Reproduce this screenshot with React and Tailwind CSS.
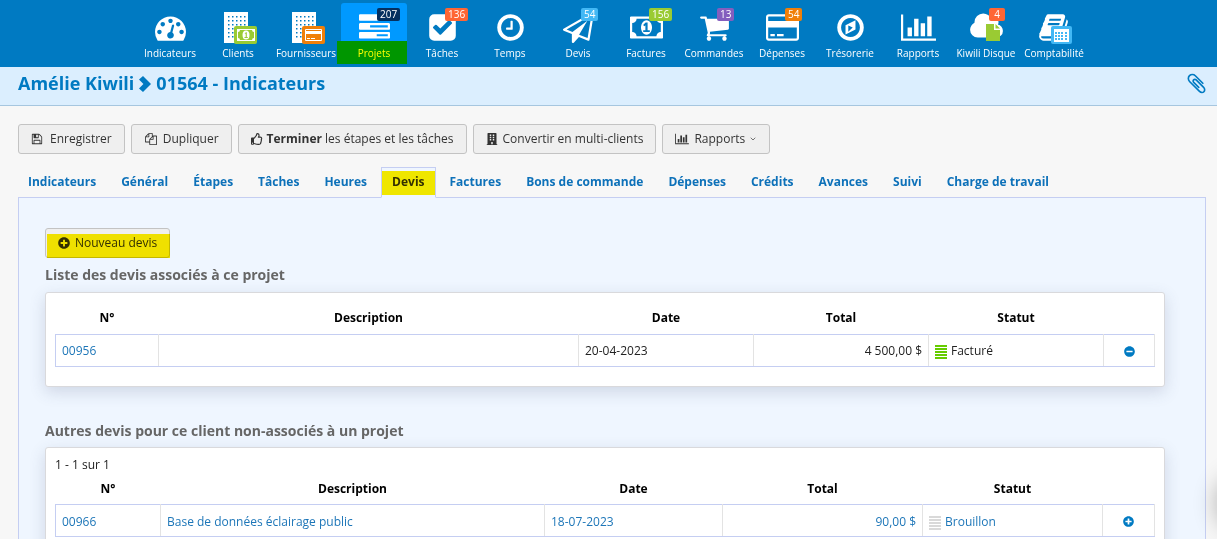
import React, { useState } from 'react';
import { FaBuilding, FaMinusCircle, FaPlusCircle, FaRegThumbsUp } from 'react-icons/fa';
import { ChevronDown } from 'lucide-react';

const paths = {
  gauge:
    'M384 1152q0-53-37.5-90.5t-90.5-37.5-90.5 37.5-37.5 90.5 37.5 90.5 90.5 37.5 90.5-37.5 37.5-90.5zm192-448q0-53-37.5-90.5t-90.5-37.5-90.5 37.5-37.5 90.5 37.5 90.5 90.5 37.5 90.5-37.5 37.5-90.5zm428 481l101-382q6-26-7.5-48.5t-38.5-29.5-48 6.5-30 39.5l-101 382q-60 5-107 43.5t-63 98.5q-20 77 20 146t117 89 146-20 89-117q16-60-6-117t-72-91zm660-33q0-53-37.5-90.5t-90.5-37.5-90.5 37.5-37.5 90.5 37.5 90.5 90.5 37.5 90.5-37.5 37.5-90.5zm-640-640q0-53-37.5-90.5t-90.5-37.5-90.5 37.5-37.5 90.5 37.5 90.5 90.5 37.5 90.5-37.5 37.5-90.5zm448 192q0-53-37.5-90.5t-90.5-37.5-90.5 37.5-37.5 90.5 37.5 90.5 90.5 37.5 90.5-37.5 37.5-90.5zm320 448q0 261-141 483-19 29-54 29h-1402q-35 0-54-29-141-221-141-483 0-182 71-348t191-286 286-191 348-71 348 71 286 191 191 286 71 348z',
  tasks:
    'M1024 1408h640v-128h-640v128zm-384-512h1024v-128h-1024v128zm640-512h384v-128h-384v128zm512 832v256q0 26-19 45t-45 19h-1664q-26 0-45-19t-19-45v-256q0-26 19-45t45-19h1664q26 0 45 19t19 45zm0-512v256q0 26-19 45t-45 19h-1664q-26 0-45-19t-19-45v-256q0-26 19-45t45-19h1664q26 0 45 19t19 45zm0-512v256q0 26-19 45t-45 19h-1664q-26 0-45-19t-19-45v-256q0-26 19-45t45-19h1664q26 0 45 19t19 45z',
  check:
    'M813 1299l614-614q19-19 19-45t-19-45l-102-102q-19-19-45-19t-45 19l-467 467-211-211q-19-19-45-19t-45 19l-102 102q-19 19-19 45t19 45l358 358q19 19 45 19t45-19zm851-883v960q0 119-84.5 203.5t-203.5 84.5h-960q-119 0-203.5-84.5t-84.5-203.5v-960q0-119 84.5-203.5t203.5-84.5h960q119 0 203.5 84.5t84.5 203.5z',
  clock:
    'M1024 544v448q0 14-9 23t-23 9h-320q-14 0-23-9t-9-23v-64q0-14 9-23t23-9h224v-352q0-14 9-23t23-9h64q14 0 23 9t9 23zm416 352q0-148-73-273t-198-198-273-73-273 73-198 198-73 273 73 273 198 198 273 73 273-73 198-198 73-273zm224 0q0 209-103 385.5t-279.5 279.5-385.5 103-385.5-103-279.5-279.5-103-385.5 103-385.5 279.5-279.5 385.5-103 385.5 103 279.5 279.5 103 385.5z',
  plane:
    'M1764 11q33 24 27 64l-256 1536q-5 29-32 45-14 8-31 8-11 0-24-5l-527-215-298 327q-18 21-47 21-14 0-23-4-19-7-30-23.5t-11-36.5v-452l-472-193q-37-14-40-55-3-39 32-59l1664-960q35-21 68 2zm-342 1499l221-1323-1434 827 336 137 863-639-478 797z',
  money:
    'M704 1152h384v-96h-128v-448h-114l-148 137 77 80q42-37 55-57h2v288h-128v96zm512-256q0 70-21 142t-59.5 134-101.5 101-138 39-138-39-101.5-101-59.5-134-21-142 21-142 59.5-134 101.5-101 138-39 138 39 101.5 101 59.5 134 21 142zm512 256v-512q-106 0-181-75t-75-181h-1152q0 106-75 181t-181 75v512q106 0 181 75t75 181h1152q0-106 75-181t181-75zm128-832v1152q0 26-19 45t-45 19h-1792q-26 0-45-19t-19-45v-1152q0-26 19-45t45-19h1792q26 0 45 19t19 45z',
  cart:
    'M704 1536q0 52-38 90t-90 38-90-38-38-90 38-90 90-38 90 38 38 90zm896 0q0 52-38 90t-90 38-90-38-38-90 38-90 90-38 90 38 38 90zm128-1088v512q0 24-16.5 42.5t-40.5 21.5l-1044 122q13 60 13 70 0 16-24 64h920q26 0 45 19t19 45-19 45-45 19h-1024q-26 0-45-19t-19-45q0-11 8-31.5t16-36 21.5-40 15.5-29.5l-177-823h-204q-26 0-45-19t-19-45 19-45 45-19h256q16 0 28.5 6.5t19.5 15.5 13 24.5 8 26 5.5 29.5 4.5 26h1201q26 0 45 19t19 45z',
  card:
    'M1760 128q66 0 113 47t47 113v1216q0 66-47 113t-113 47h-1600q-66 0-113-47t-47-113v-1216q0-66 47-113t113-47h1600zm-1600 128q-13 0-22.5 9.5t-9.5 22.5v224h1664v-224q0-13-9.5-22.5t-22.5-9.5h-1600zm1600 1280q13 0 22.5-9.5t9.5-22.5v-608h-1664v608q0 13 9.5 22.5t22.5 9.5h1600zm-1504-128v-128h256v128h-256zm384 0v-128h384v128h-384z',
  compass:
    'M768 1143l256-247-256-119v366zm416-663v527l-576 289v-527zm256 416q0-148-73-273t-198-198-273-73-273 73-198 198-73 273 73 273 198 198 273 73 273-73 198-198 73-273zm224 0q0 209-103 385.5t-279.5 279.5-385.5 103-385.5-103-279.5-279.5-103-385.5 103-385.5 279.5-279.5 385.5-103 385.5 103 279.5 279.5 103 385.5z',
  chart:
    'M640 896v512h-256v-512h256zm384-512v1024h-256v-1024h256zm1024 1152v128h-2048v-1536h128v1408h1920zm-640-896v768h-256v-768h256zm384-384v1152h-256v-1152h256z',
  cloud:
    'M1984 1152q0 159-112.5 271.5t-271.5 112.5h-1088q-185 0-316.5-131.5t-131.5-316.5q0-132 71-241.5t187-163.5q-2-28-2-43 0-212 150-362t362-150q158 0 286.5 88t187.5 230q70-62 166-62 106 0 181 75t75 181q0 75-41 138 129 30 213 134.5t84 239.5z',
  book:
    'M1703 478q40 57 18 129l-275 906q-19 64-76.5 107.5t-122.5 43.5h-923q-77 0-148.5-53.5t-99.5-131.5q-24-67-2-127 0-4 3-27t4-37q1-8-3-21.5t-3-19.5q2-11 8-21t16.5-23.5 16.5-23.5q23-38 45-91.5t30-91.5q3-10 .5-30t-.5-28q3-11 17-28t17-23q21-36 42-92t25-90q1-9-2.5-32t.5-28q4-13 22-30.5t22-22.5q19-26 42.5-84.5t27.5-96.5q1-8-3-25.5t-2-26.5q2-8 9-18t18-23 17-21q8-12 16.5-30.5t15-35 16-36 19.5-32 26.5-23.5 36-11.5 47.5 5.5l-1 3q38-9 51-9h761q74 0 114 56t18 130l-274 906q-36 119-71.5 153.5t-128.5 34.5h-869q-27 0-38 15-11 16-1 43 24 70 144 70h923q29 0 56-15.5t35-41.5l300-987q7-22 5-57 38 15 59 43zm-1064 2q-4 13 2 22.5t20 9.5h608q13 0 25.5-9.5t16.5-22.5l21-64q4-13-2-22.5t-20-9.5h-608q-13 0-25.5 9.5t-16.5 22.5zm-83 256q-4 13 2 22.5t20 9.5h608q13 0 25.5-9.5t16.5-22.5l21-64q4-13-2-22.5t-20-9.5h-608q-13 0-25.5 9.5t-16.5 22.5z',
  clip:
    'M1596 1385q0 117-79 196t-196 79q-135 0-235-100l-777-776q-113-115-113-271 0-159 110-270t269-111q158 0 273 113l605 606q10 10 10 22 0 16-30.5 46.5t-46.5 30.5q-13 0-23-10l-606-607q-79-77-181-77-106 0-179 75t-73 181q0 105 76 181l776 777q63 63 145 63 64 0 106-42t42-106q0-82-63-145l-581-581q-26-24-60-24-29 0-48 19t-19 48q0 32 25 59l410 410q10 10 10 22 0 16-31 47t-47 31q-12 0-22-10l-410-410q-63-61-63-149 0-82 57-139t139-57q88 0 149 63l581 581q100 98 100 235z',
  floppy:
    'M512 1536h768v-384h-768v384zm896 0h128v-896q0-14-10-38.5t-20-34.5l-281-281q-10-10-34-20t-39-10v416q0 40-28 68t-68 28h-576q-40 0-68-28t-28-68v-416h-128v1280h128v-416q0-40 28-68t68-28h832q40 0 68 28t28 68v416zm-384-928v-320q0-13-9.5-22.5t-22.5-9.5h-192q-13 0-22.5 9.5t-9.5 22.5v320q0 13 9.5 22.5t22.5 9.5h192q13 0 22.5-9.5t9.5-22.5zm640 32v928q0 40-28 68t-68 28h-1344q-40 0-68-28t-28-68v-1344q0-40 28-68t68-28h928q40 0 88 20t76 48l280 280q28 28 48 76t20 88z',
  files:
    'M1696 384q40 0 68 28t28 68v1216q0 40-28 68t-68 28h-960q-40 0-68-28t-28-68v-288h-544q-40 0-68-28t-28-68v-672q0-40 20-88t48-76l408-408q28-28 76-48t88-20h416q40 0 68 28t28 68v328q68-40 128-40h416zm-544 213l-299 299h299v-299zm-640-384l-299 299h299v-299zm196 647l316-316v-416h-384v416q0 40-28 68t-68 28h-416v640h512v-256q0-40 20-88t48-76zm956 804v-1152h-384v416q0 40-28 68t-68 28h-416v640h896z',
  chevron: 'M4 0L12 8L4 16L0 12.4L4.4 8L0 3.6z',
};

function Glyph({ name, viewBox = '0 0 1792 1792', className }) {
  return (
    <svg viewBox={viewBox} fill="currentColor" className={className} aria-hidden="true">
      <path d={paths[name]} />
    </svg>
  );
}

// Building with a small card in the lower right corner
function BuildingIcon({ color, kind }) {
  const dots = [];
  for (let row = 0; row < 6; row++) {
    for (let col = 0; col < 5; col++) {
      dots.push(<rect key={`${row}-${col}`} x={4 + col * 4} y={4 + row * 4} width="1.5" height="1.5" fill="#007ac2" />);
    }
  }
  return (
    <svg viewBox="0 0 36 34" className="h-[34px] w-9" aria-hidden="true">
      <rect width="24" height="31" fill="#fff" />
      {dots}
      <rect x="10" y="14" width="23" height="18" rx="2" fill={color} />
      {kind === 'bill' ? (
        <g>
          <rect x="13" y="17" width="18" height="12" fill="#fff" />
          <path d="M16 18h12q0 2 2 2v6q-2 0-2 2H16q0-2-2-2v-6q2 0 2-2z" fill={color} />
          <ellipse cx="22" cy="23" rx="3.5" ry="4.5" fill="#fff" />
          <path d="M20.5 21.5l1.5-1.2h.8V25h1v1h-3.3v-1h1.2v-3.3z" fill={color} />
        </g>
      ) : (
        <g>
          <rect x="13" y="17" width="17" height="12" rx="1" fill="#fff" />
          <rect x="14" y="18" width="15" height="1" fill={color} />
          <rect x="14" y="22" width="15" height="6" fill={color} />
          <rect x="15" y="26" width="3" height="1" fill="#fff" />
          <rect x="19" y="26" width="4" height="1" fill="#fff" />
        </g>
      )}
    </svg>
  );
}

function DiskIcon() {
  return (
    <svg viewBox="0 0 36 34" className="h-[34px] w-9" aria-hidden="true">
      <svg x="1" y="-1" width="35" height="31" viewBox="0 0 2048 1792">
        <path d={paths.cloud} fill="#fff" />
      </svg>
      <path d="M18 12h8v6h6v11H18z" fill="#9acb33" />
      <path d="M27.500 12l4.500 4.500h-4.500z" fill="#9acb33" />
    </svg>
  );
}

function AccountingIcon() {
  return (
    <svg viewBox="0 0 36 32" className="h-8 w-9" aria-hidden="true">
      <svg x="2" y="-2" width="31" height="31" viewBox="0 0 1792 1792">
        <path d={paths.book} fill="#fff" />
      </svg>
      <rect x="15" y="12" width="21" height="18" rx="2" fill="#42b8f5" />
      <rect x="18" y="15" width="15" height="13" fill="#fff" />
      {[18, 21, 24].map((y) =>
        [19, 22, 25, 29].map((x) => <rect key={`${x}-${y}`} x={x} y={y} width="2" height="2" fill="#42b8f5" />)
      )}
    </svg>
  );
}

const modules = [
  { label: 'Indicateurs', icon: <Glyph name="gauge" className="h-[31px] w-[31px]" /> },
  { label: 'Clients', icon: <BuildingIcon color="#9acb33" kind="bill" />, offset: 'pt-[9px] pl-2' },
  { label: 'Fournisseurs', icon: <BuildingIcon color="#f07f09" kind="card" />, offset: 'pt-[9px] pl-2' },
  { label: 'Projets', icon: <Glyph name="tasks" className="h-[31px] w-[31px]" />, badge: '207', badgeColor: 'bg-[#05305f]' },
  { label: 'Tâches', icon: <Glyph name="check" className="h-[31px] w-[31px]" />, badge: '136', badgeColor: 'bg-[#ff6634]' },
  { label: 'Temps', icon: <Glyph name="clock" className="h-[31px] w-[31px]" /> },
  { label: 'Devis', icon: <Glyph name="plane" className="h-[31px] w-[31px]" />, badge: '54', badgeColor: 'bg-[#42b8f5]' },
  {
    label: 'Factures',
    icon: <Glyph name="money" viewBox="-64 0 1920 1792" className="h-[31px] w-[33px]" />,
    badge: '156',
    badgeColor: 'bg-[#9acb33]',
  },
  { label: 'Commandes', icon: <Glyph name="cart" className="h-[31px] w-[31px]" />, badge: '13', badgeColor: 'bg-[#845ebe]' },
  {
    label: 'Dépenses',
    icon: <Glyph name="card" viewBox="0 0 1920 1792" className="h-[31px] w-[33px]" />,
    badge: '54',
    badgeColor: 'bg-[#f07f09]',
  },
  { label: 'Trésorerie', icon: <Glyph name="compass" className="h-[31px] w-[31px]" /> },
  { label: 'Rapports', icon: <Glyph name="chart" viewBox="0 0 2048 1792" className="h-[31px] w-[35px]" /> },
  { label: 'Kiwili Disque', icon: <DiskIcon />, badge: '4', badgeColor: 'bg-[#ff6634]' },
  { label: 'Comptabilité', icon: <AccountingIcon />, offset: 'pt-[11px]' },
];

const tabs = [
  'Indicateurs', 'Général', 'Étapes', 'Tâches', 'Heures', 'Devis', 'Factures', 'Bons de commande',
  'Dépenses', 'Crédits', 'Avances', 'Suivi', 'Charge de travail',
];

function ModuleLink({ item, active }) {
  return (
    <a
      href="#"
      className={`relative flex h-[60px] w-[66px] flex-col items-center rounded-[3px] text-white ${
        active ? 'bg-[#0099ff]' : ''
      }`}
    >
      <span className={`flex h-[42px] shrink-0 items-start ${item.offset || 'pt-[9px]'}`}>{item.icon}</span>
      {item.badge && (
        <span
          className={`absolute top-[5px] left-[36px] min-w-4 rounded-[2px] px-[3px] text-center text-[10px] leading-[13px] text-white ${item.badgeColor}`}
        >
          {item.badge}
        </span>
      )}
      {active && <span className="absolute top-[38px] -left-1 h-[23px] w-[70px] bg-[#009600]" />}
      <span className={`relative text-[10px] leading-4 whitespace-nowrap ${active ? 'text-[#ffff00]' : ''}`}>
        {item.label}
      </span>
    </a>
  );
}

function ActionButton({ children }) {
  return (
    <button
      type="button"
      className="relative flex h-[30px] items-center rounded-[3px] border border-[#c3c3c3] bg-[#efefef] px-3 text-xs text-[#333]"
    >
      {children}
    </button>
  );
}

function StatusBars({ color }) {
  return (
    <svg viewBox="0 0 12 14" className="mt-[2px] h-3.5 w-3 shrink-0" fill={color} aria-hidden="true">
      <path d="M0 0h12v2H0zM0 3h12v2H0zM0 6h12v2H0zM0 9h12v2H0zM0 12h12v2H0z" />
    </svg>
  );
}

function QuoteTable({ columns, quote, linked, statusColor, action }) {
  const cell = 'h-8 border-x border-x-[#e3e3e3] border-y border-y-[#c5cef2] px-1.5 pt-[2px]';
  const text = linked ? 'text-[#1d76b8]' : 'text-[#222]';
  return (
    <table className="w-full table-fixed border-collapse text-xs">
      <colgroup>
        {columns.map((width, i) => (
          <col key={i} className={width} />
        ))}
      </colgroup>
      <thead>
        <tr className="h-[33px] text-black">
          <th scope="col" className="pt-[2px]">N°</th>
          <th scope="col" className="pt-[2px]">Description</th>
          <th scope="col" className="pt-[2px]">Date</th>
          <th scope="col" className="pt-[2px]">Total</th>
          <th scope="col" className="pt-[2px]">Statut</th>
          <td></td>
        </tr>
      </thead>
      <tbody>
        <tr className={`h-8 ${text}`}>
          <td className="h-8 border border-[#c5cef2] border-r-[#e3e3e3] px-1.5 pt-[2px]">
            <a href="#" className="text-[#1d76b8]">{quote.number}</a>
          </td>
          <td className={cell}>{quote.description}</td>
          <td className={cell}>{quote.date}</td>
          <td className={`${cell} text-right`}>{quote.total}</td>
          <td className={cell}>
            <span className="flex items-center gap-1">
              <StatusBars color={statusColor} />
              {quote.status}
            </span>
          </td>
          <td className={cell}>
            <button
              type="button"
              aria-label={action === 'remove' ? 'Dissocier' : 'Associer'}
              className="mx-auto block text-[11px] text-[#007ac2]"
            >
              {action === 'remove' ? <FaMinusCircle /> : <FaPlusCircle />}
            </button>
          </td>
        </tr>
      </tbody>
    </table>
  );
}

export default function App() {
  const [activeTab, setActiveTab] = useState('Devis');
  const card = 'rounded-[3px] border border-[#d9d9dc] bg-white px-[9px] shadow-[0_5px_16px_rgba(60,70,110,0.18)]';

  return (
    <div className="relative flex h-screen flex-col overflow-hidden bg-[#f7f7f7] font-['Open_Sans',sans-serif] text-xs text-[#333]">
      {/* Module bar */}
      <nav className="flex h-[67px] shrink-0 justify-center gap-[2px] bg-[#007ac2] pt-[3px] pl-[7px]">
        {modules.map((item) => (
          <ModuleLink key={item.label} item={item} active={item.label === 'Projets'} />
        ))}
      </nav>

      {/* Title */}
      <header className="flex h-[39px] shrink-0 items-center justify-between border-b border-[#a6c6df] bg-[#dbeefe] pr-[9px] pl-[18px] text-[#007ac2]">
        <h1 className="flex items-center pb-[6px] text-lg font-bold">
          <a href="#">Amélie Kiwili</a>
          <Glyph name="chevron" viewBox="0 0 12 16" className="mx-[5px] mt-[2px] h-4 w-3" />
          01564 - Indicateurs
        </h1>
        <button type="button" aria-label="Pièces jointes" className="pb-[6px]">
          <Glyph name="clip" className="h-[23px] w-[23px]" />
        </button>
      </header>

      <main className="flex min-h-0 grow flex-col pt-[18px] pr-[11px] pl-[18px]">
        <div className="flex shrink-0 gap-[6px]">
          <ActionButton>
            <Glyph name="floppy" className="mr-[7px] h-3 w-3" />
            Enregistrer
          </ActionButton>
          <ActionButton>
            <Glyph name="files" className="mr-[5px] h-3 w-[14px]" />
            Dupliquer
          </ActionButton>
          <ActionButton>
            <FaRegThumbsUp className="mr-1 h-3 w-3" />
            <span><b>Terminer</b> les étapes et les tâches</span>
          </ActionButton>
          <ActionButton>
            <FaBuilding className="mr-[5px] h-3 w-3" />
            Convertir en multi-clients
          </ActionButton>
          <ActionButton>
            <Glyph name="chart" viewBox="0 0 2048 1792" className="mr-[5px] h-3 w-[14px]" />
            Rapports
            <ChevronDown className="ml-1 h-3 w-2" />
          </ActionButton>
        </div>

        {/* Tabs */}
        <div role="tablist" className="relative z-10 mt-[13px] -mb-px -ml-px flex shrink-0 gap-[3px]">
          {tabs.map((tab) => (
            <button
              key={tab}
              type="button"
              role="tab"
              aria-selected={tab === activeTab}
              onClick={() => setActiveTab(tab)}
              className={`relative h-[31px] border px-[10px] pb-[2px] text-xs font-bold whitespace-nowrap ${
                tab === activeTab
                  ? 'border-[#c5cef2] border-b-[#eff6ff] bg-[#eff6ff] text-[#333]'
                  : 'border-transparent text-[#0d71b9]'
              }`}
            >
              {tab}
              {tab === activeTab && <span className="absolute inset-x-0 top-[3px] h-6 bg-[#ffef00] mix-blend-multiply" />}
            </button>
          ))}
        </div>

        <section className="grow border border-b-0 border-[#c5cef2] bg-[#eff6ff] pt-[30px] pr-10 pl-[26px]">
          <div className="flex">
            <ActionButton>
              <FaPlusCircle className="mr-[5px] h-3 w-3" />
              Nouveau devis
              <span className="absolute top-[5px] -right-px left-px h-6 bg-[#ffef00] mix-blend-multiply" />
            </ActionButton>
          </div>

          <h2 className="mt-[7px] mb-[7px] text-sm leading-5 font-bold text-[#666]">Liste des devis associés à ce projet</h2>
          <div className={`${card} pt-2 pb-[19px]`}>
            <QuoteTable
              columns={['w-[103px]', '', 'w-[175px]', 'w-[175px]', 'w-[175px]', 'w-[51px]']}
              quote={{ number: '00956', description: '', date: '20-04-2023', total: '4 500,00 $', status: 'Facturé' }}
              statusColor="#66cc00"
              action="remove"
            />
          </div>

          <h2 className="mt-[34px] mb-[6px] text-sm leading-5 font-bold text-[#666]">
            Autres devis pour ce client non-associés à un projet
          </h2>
          <div className={`${card} pt-2 pb-[19px]`}>
            <p className="h-4 text-xs leading-[18px] text-[#222]">1 - 1 sur 1</p>
            <QuoteTable
              columns={['w-[105px]', '', 'w-[178px]', 'w-[200px]', 'w-[180px]', 'w-[52px]']}
              quote={{
                number: '00966',
                description: 'Base de données éclairage public',
                date: '18-07-2023',
                total: '90,00 $',
                status: 'Brouillon',
              }}
              linked
              statusColor="#d9d9d9"
              action="add"
            />
          </div>
        </section>
      </main>

      {/* Folded help bubble, only its shadow shows at the edge */}
      <div className="absolute -right-14 bottom-2 h-14 w-14 rounded-full shadow-[0_0_24px_rgba(0,0,0,0.3)]" />
    </div>
  );
}
